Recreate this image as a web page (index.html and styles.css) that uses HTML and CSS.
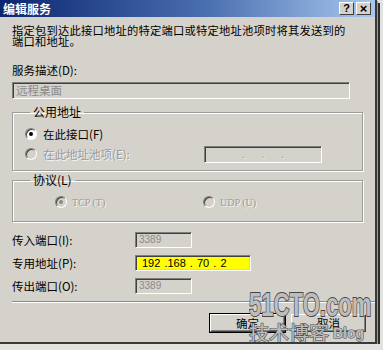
FILE: index.html
```html
<!DOCTYPE html>
<html lang="zh-CN">

<head>
    <meta charset="UTF-8">
    <title>编辑服务</title>
    <link rel="stylesheet" href="styles.css">
</head>

<body>
    <div class="window">
        <div class="titlebar">
            <span class="title">编辑服务</span>
            <div class="tb-buttons">
                <span class="tb-btn">?</span>
                <span class="tb-btn close">×</span>
            </div>
        </div>
        <div class="content">
            <p class="intro">指定包到达此接口地址的特定端口或特定地址池项时将其发送到的<br>端口和地址。</p>
            <div class="label">服务描述(D):</div>
            <div class="field wide disabled">远程桌面</div>

            <fieldset class="group pub">
                <legend>公用地址</legend>
                <div class="radio-row">
                    <span class="radio checked"></span>
                    <span>在此接口(F)</span>
                </div>
                <div class="radio-row off">
                    <span class="radio"></span>
                    <span class="grow">在此地址池项(E):</span>
                    <span class="ipbox"><i>.</i><i>.</i><i>.</i></span>
                </div>
            </fieldset>

            <fieldset class="group proto">
                <legend>协议(L)</legend>
                <div class="proto-row">
                    <div class="radio-row off tcp">
                        <span class="radio checked"></span>
                        <span>TCP (T)</span>
                    </div>
                    <div class="radio-row off">
                        <span class="radio"></span>
                        <span>UDP (U)</span>
                    </div>
                </div>
            </fieldset>

            <div class="ports">
                <span class="plabel">传入端口(I):</span>
                <span class="field small disabled">3389</span>
                <span class="plabel">专用地址(P):</span>
                <span class="field ip">192 .168 . 70 . 2</span>
                <span class="plabel">传出端口(O):</span>
                <span class="field small disabled">3389</span>
            </div>

            <div class="sep"></div>

            <div class="buttons">
                <span class="btn default">确定</span>
                <span class="btn">取消</span>
            </div>
        </div>

        <div class="watermark">
            <div class="wm-site">51CTO.com</div>
            <div class="wm-blog">技术博客<span>Blog</span></div>
        </div>
    </div>
</body>

</html>
```

FILE: styles.css
```css
* {
    margin: 0;
    padding: 0;
    box-sizing: border-box;
}

body {
    background-color: #e2e2e0;
    font-family: "Noto Sans CJK SC", "Liberation Sans", sans-serif;
    font-size: 11.5px;
    color: #000;
}

.window {
    position: relative;
    width: 377px;
    height: 344px;
    background-color: #d5d2cb;
    border-right: 2px solid #3a3a3a;
    border-bottom: 2px solid #3a3a3a;
    box-shadow: 1px 1px 0 #9a9a9a, 3px 3px 0 #2c2c2c;
    overflow: hidden;
}

/* title bar */
.titlebar {
    height: 17px;
    display: flex;
    align-items: center;
    justify-content: space-between;
    padding: 0 4px 0 3px;
    background: linear-gradient(to right, #0b2670, #4a6fb0 55%, #a8c8ee);
}

.title {
    color: #fff;
    font-weight: bold;
    font-size: 12px;
    line-height: 17px;
}

.tb-buttons {
    display: flex;
    gap: 2px;
}

.tb-btn {
    width: 15px;
    height: 13px;
    background-color: #d5d2cb;
    border: 1px solid;
    border-color: #fff #404040 #404040 #fff;
    font-family: "Liberation Sans", sans-serif;
    font-weight: bold;
    font-size: 11px;
    line-height: 11px;
    text-align: center;
}

.tb-btn.close {
    font-size: 13px;
}

/* body */
.content {
    padding: 8px 0 0 12px;
}

.intro {
    line-height: 11px;
    font-size: 11.3px;
    letter-spacing: 0.2px;
    white-space: nowrap;
    height: 22px;
}

.label {
    margin-top: 17px;
    line-height: 12px;
}

.field {
    display: block;
    height: 17px;
    border: 1px solid;
    border-color: #7e7e7e #fff #fff #7e7e7e;
    box-shadow: inset 1px 1px 0 #404040, inset -1px -1px 0 #d5d2cb;
    padding-left: 3px;
    line-height: 15px;
    white-space: nowrap;
}

.field.wide {
    width: 338px;
    margin-top: 6px;
}

.disabled {
    color: #8a8a8a;
}

/* group boxes */
.group {
    width: 351px;
    border: 1px solid #9c9c9c;
    box-shadow: 1px 1px 0 #fff, inset 1px 1px 0 #fff;
    padding: 5px 0 6px 12px;
}

.group legend {
    margin-left: 5px;
    padding: 0 3px;
    font-size: 12px;
    line-height: 14px;
}

.group.pub {
    margin-top: 6px;
}

.group.proto {
    margin-top: 2px;
    padding-bottom: 9px;
}

.radio-row {
    height: 20px;
    display: flex;
    align-items: center;
    gap: 6px;
    padding-right: 40px;
}

.radio-row .grow {
    flex: 1;
}

.radio {
    width: 12px;
    height: 12px;
    border-radius: 50%;
    background-color: #fff;
    border: 1px solid;
    border-color: #7e7e7e #fff #fff #7e7e7e;
    box-shadow: inset 1px 1px 0 #404040;
    display: flex;
    align-items: center;
    justify-content: center;
}

.radio.checked::after {
    content: "";
    width: 4px;
    height: 4px;
    border-radius: 50%;
    background-color: #000;
}

.off {
    color: #9a9a9a;
    text-shadow: 1px 1px 0 #f4f4f4;
}

.off .radio {
    background-color: #d5d2cb;
}

.off .radio.checked::after {
    background-color: #8a8a8a;
}

.ipbox {
    width: 118px;
    height: 17px;
    border: 1px solid;
    border-color: #7e7e7e #fff #fff #7e7e7e;
    box-shadow: inset 1px 1px 0 #404040;
    display: flex;
    justify-content: space-evenly;
    padding: 0 20px;
    line-height: 13px;
    font-size: 10px;
}

.ipbox i {
    font-style: normal;
}

.proto-row {
    display: flex;
    padding-left: 30px;
}

.proto-row .tcp {
    width: 148px;
}

.proto-row .radio-row {
    font-family: "Liberation Serif", "Noto Sans CJK SC", serif;
    font-size: 10px;
    gap: 5px;
}

/* port fields */
.ports {
    display: grid;
    grid-template-columns: 123px auto;
    row-gap: 7px;
    align-items: center;
    justify-items: start;
    margin-top: 10px;
}

.plabel {
    line-height: 16px;
}

.ports .field {
    height: 16px;
    line-height: 14px;
    font-size: 10px;
    font-family: "Liberation Sans", sans-serif;
}

.field.small {
    width: 57px;
}

.field.ip {
    width: 116px;
    background-color: #ffff00;
    padding-left: 6px;
    font-size: 11px;
    word-spacing: 1px;
}

.sep {
    margin-top: 7px;
    height: 2px;
    border-top: 1px solid #8c8c8c;
    border-bottom: 1px solid #fff;
}

.buttons {
    display: flex;
    justify-content: flex-end;
    gap: 6px;
    margin-top: 11px;
    padding-right: 9px;
}

.btn {
    width: 75px;
    height: 18px;
    border: 1px solid;
    border-color: #fff #404040 #404040 #fff;
    box-shadow: inset -1px -1px 0 #808080;
    text-align: center;
    line-height: 16px;
    font-size: 11.5px;
}

.btn.default {
    outline: 1px solid #000;
}

/* watermark laid over the dialog corner */
.watermark {
    position: absolute;
    left: 249px;
    top: 289px;
    width: 128px;
    color: #bdbdbd;
}

.wm-site {
    font-family: "Liberation Sans", sans-serif;
    font-weight: bold;
    font-size: 33px;
    line-height: 32px;
    transform: scaleX(0.67);
    transform-origin: left center;
    white-space: nowrap;
    -webkit-text-stroke: 1.8px #474747;
    paint-order: stroke fill;
}

.wm-blog {
    font-family: "Noto Sans CJK SC", sans-serif;
    font-size: 20px;
    line-height: 24px;
    display: flex;
    align-items: center;
    white-space: nowrap;
    -webkit-text-stroke: 1.2px #4a4a4a;
    paint-order: stroke fill;
}

.wm-blog span {
    font-family: "Liberation Sans", sans-serif;
    font-size: 14px;
    font-weight: bold;
    margin-left: 4px;
    -webkit-text-stroke: 1px #4a4a4a;
}
```
